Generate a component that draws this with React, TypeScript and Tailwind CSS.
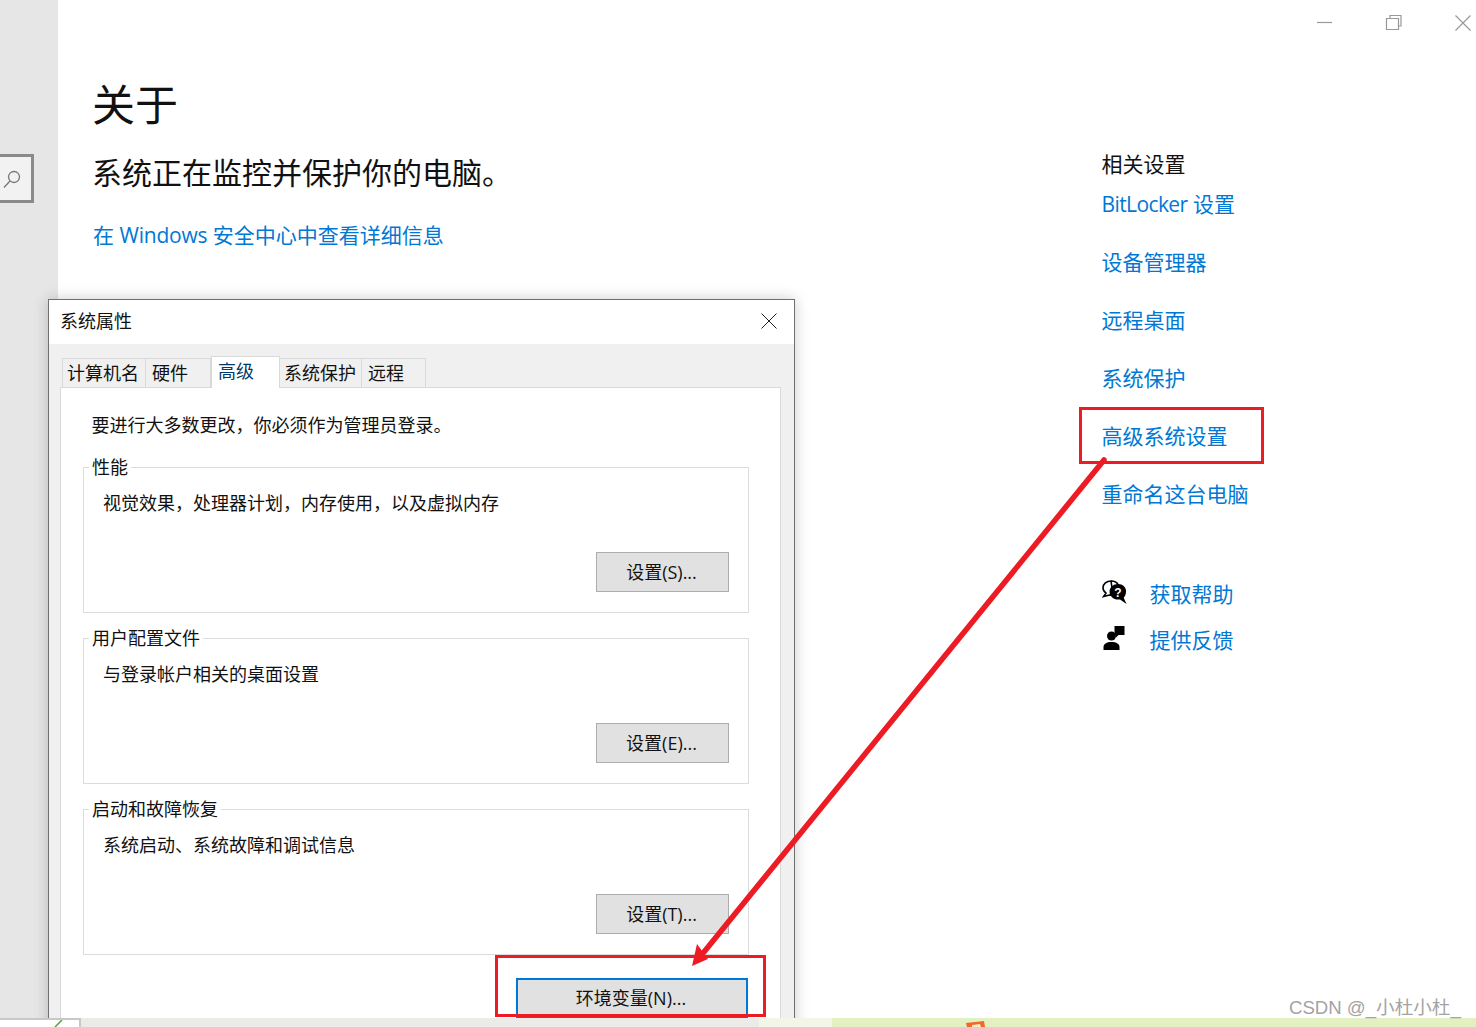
const font = "font-['Open_Sans','Noto_Sans_CJK_SC',sans-serif]";

const relatedLinks = ["设备管理器", "远程桌面", "系统保护", "高级系统设置", "重命名这台电脑"];

function GroupBox({ title, desc, button }: { title: string; desc: string; button: string }) {
  return (
    <div className="relative h-[146px] border border-[#dcdcdc]">
      <span className="absolute -top-[13px] left-[5px] bg-white px-[3px] text-[18px] leading-[24px] text-[#111]">{title}</span>
      <p className="pl-[19px] pt-[22px] text-[18px] leading-[26px] text-[#111]">{desc}</p>
      <button className="absolute bottom-[20px] right-[19px] h-[40px] w-[133px] border border-[#adadad] bg-[#e1e1e1] pr-[2px] text-[18px] text-[#111]">
        {button}
      </button>
    </div>
  );
}

function SystemDialog() {
  return (
    <div className="absolute left-[48px] top-[299px] h-[740px] w-[747px] border border-[#707070] bg-[#f0f0f0] shadow-[0_0_14px_rgba(0,0,0,0.2)]">
      <div className="flex h-[44px] items-center justify-between bg-white pb-[2px] pl-[11px] pr-[16px]">
        <span className="text-[18px] text-[#111]">系统属性</span>
        <svg width="18" height="18" viewBox="0 0 18 18" fill="none" stroke="#222" strokeWidth="1">
          <path d="M1.500 1.500 16.500 16.500M16.500 1.500 1.500 16.500" />
        </svg>
      </div>
      <div className="relative flex h-[43px] items-end pl-[13px] text-[18px] text-[#111]">
        <div className="flex h-[29px] w-[84px] items-center border border-b-0 border-[#d9d9d9] pl-[4px]">计算机名</div>
        <div className="flex h-[29px] w-[65px] items-center border border-b-0 border-l-0 border-[#d9d9d9] pl-[6px]">硬件</div>
        <div className="relative z-10 -mb-px flex h-[32px] w-[69px] items-center border border-b-0 border-[#d9d9d9] bg-white pb-[3px] pl-[6px] text-[#003a6a]">高级</div>
        <div className="flex h-[29px] w-[82px] items-center border border-b-0 border-l-0 border-[#d9d9d9] pl-[4px]">系统保护</div>
        <div className="flex h-[29px] w-[64px] items-center border border-b-0 border-l-0 border-[#d9d9d9] pl-[6px]">远程</div>
      </div>
      <div className="ml-[11px] h-[700px] w-[721px] border border-[#d9d9d9] bg-white pl-[22px] pr-[31px]">
        <p className="pl-[8.500px] pt-[24px] text-[18px] leading-[26px] text-[#111]">要进行大多数更改，你必须作为管理员登录。</p>
        <div className="mt-[29px] flex flex-col gap-[25px]">
          <GroupBox title="性能" desc="视觉效果，处理器计划，内存使用，以及虚拟内存" button="设置(S)..." />
          <GroupBox title="用户配置文件" desc="与登录帐户相关的桌面设置" button="设置(E)..." />
          <GroupBox title="启动和故障恢复" desc="系统启动、系统故障和调试信息" button="设置(T)..." />
        </div>
        <button className="absolute left-[467px] top-[678px] h-[40px] w-[232px] border-2 border-[#0078d7] bg-[#e1e1e1] pr-[2px] text-[18px] text-[#111]">
          环境变量(N)...
        </button>
      </div>
    </div>
  );
}

export default function App() {
  return (
    <div className={`relative h-[1027px] w-[1476px] overflow-hidden bg-white ${font}`}>
      <div className="flex h-[1018px]">
        {/* left nav */}
        <aside className="relative w-[58px] shrink-0 bg-[#e6e6e6]">
          <div className="absolute left-0 top-[154px] flex h-[49px] w-[34px] items-center justify-center border-[3px] border-l-0 border-[#8a8a8a] bg-[#f2f2f2]">
            <svg width="20" height="20" viewBox="0 0 20 20" fill="none" stroke="#777" strokeWidth="1.3" className="-ml-[8px]">
              <circle cx="12" cy="8" r="5.500" />
              <path d="M8 12 2 18.500" />
            </svg>
          </div>
        </aside>

        <main className="flex flex-1 justify-between">
          <div className="pl-[35px] pt-[74px]">
            <h1 className="-ml-px text-[43px] leading-[62px] text-[#111]">关于</h1>
            <p className="-ml-px mt-[15px] text-[30px] leading-[44px] text-[#111]">系统正在监控并保护你的电脑。</p>
            <a className="mt-[24px] block text-[21px] leading-[32px] text-[#0078d4]">
              在 <span className="tracking-[-0.2px]">Windows</span> 安全中心中查看详细信息
            </a>
          </div>
          <div className="w-[374.500px] pt-[149px]">
            <div className="h-[30px] text-[21px] leading-[30px] text-[#111]">相关设置</div>
            <div className="mt-[10px] flex flex-col gap-[28px]">
              <a className="h-[30px] text-[21px] leading-[30px] text-[#0078d4]">
                <span className="tracking-[-0.6px]">BitLocker</span> 设置
              </a>
              {relatedLinks.map((l) => (
                <a key={l} className="h-[30px] text-[21px] leading-[30px] text-[#0078d4]">{l}</a>
              ))}
            </div>
            <div className="mt-[70px] flex flex-col gap-[16px]">
              <div className="flex h-[30px] items-center gap-[23px]">
                <svg width="25" height="24" viewBox="0 0 25 24" className="-mt-[4px]">
                  <path d="M9 1C4.600 1 1 4 1 7.800c0 2.200 1.200 4.100 3 5.400L1.500 16.500l6-1.500c1 .2 2.500.2 3.500 0Z" fill="#fff" stroke="#000" strokeWidth="1.600" />
                  <path d="M9 1c3.300 0 6 1.500 7.300 3.800" fill="none" stroke="#000" strokeWidth="1.600" />
                  <path d="M16 4C11.300 4 7.500 7.500 7.500 11.800s3.800 7.800 8.500 7.800c.7 0 1.300-.1 2-.2l6.500 4.600-2.800-6.300c1.400-1.400 2.300-3.500 2.300-5.900C24.500 7.500 20.700 4 16 4Z" fill="#000" />
                  <text x="16" y="16.500" textAnchor="middle" fontSize="12" fontWeight="700" fill="#fff" fontFamily="Liberation Sans, sans-serif">?</text>
                </svg>
                <a className="text-[21px] leading-[30px] text-[#0078d4]">获取帮助</a>
              </div>
              <div className="flex h-[30px] items-center gap-[23px]">
                <svg width="25" height="24" viewBox="0 0 25 24" className="-mt-[4px]">
                  <circle cx="9.500" cy="10" r="4.500" />
                  <path d="M1.500 24v-3c0-3 3-5 8-5s8 2 8 5v3Z" />
                  <path d="M12.500 0h10v9h-6l-2.500 2.500V9h-1.500Z" />
                </svg>
                <a className="text-[21px] leading-[30px] text-[#0078d4]">提供反馈</a>
              </div>
            </div>
          </div>
        </main>
      </div>

      {/* window buttons */}
      <svg className="absolute right-0 top-0" width="170" height="34" viewBox="0 0 170 34" fill="none" stroke="#999" strokeWidth="1.2">
        <path d="M11 22.500h15" />
        <path d="M80.500 18.500h12v11h-12Z" />
        <path d="M84 18V15.500h11V26h-2.500" />
        <path d="M149.500 15.500l15 15M164.500 15.500l-15 15" />
      </svg>

      <SystemDialog />

      {/* bottom strip of the window behind */}
      <div className="absolute bottom-0 left-0 flex h-[9px] w-full">
        <div className="relative w-[81px] border-r-[2px] border-t-[2px] border-[#c8c8c8] bg-white">
          <svg className="absolute left-[52px] top-0" width="14" height="7" viewBox="0 0 14 7" fill="none" stroke="#5d9e3c" strokeWidth="1.500">
            <path d="M3 7 10 0" />
          </svg>
        </div>
        <div className="w-[678px] bg-[#ebebe8]" />
        <div className="w-[73px] bg-[#f2f6e9]" />
        <div className="relative flex-1 bg-[#e3f0c1]">
          <svg className="absolute left-[134px] top-[3px]" width="20" height="6" viewBox="0 0 20 6">
            <path d="M0 2 18 0l1 6h-4l-1-3-8 1v2H1Z" fill="#f4672c" />
          </svg>
        </div>
      </div>

      {/* annotations */}
      <div className="absolute left-[1079px] top-[407px] h-[57px] w-[185px] border-[3px] border-[#ed1c24]" />
      <div className="absolute left-[495px] top-[955px] h-[62px] w-[271px] border-[3px] border-[#ed1c24]" />
      <svg className="absolute left-0 top-0" width="1476" height="1027" fill="none">
        <path d="M1104 460 704 952" stroke="#ed1c24" strokeWidth="5.500" strokeLinecap="round" />
        <path d="M692 966 697 944 708 959Z" fill="#ed1c24" />
      </svg>

      <div className="absolute left-[1289px] top-[996px] font-['Liberation_Sans','Noto_Sans_CJK_SC',sans-serif] text-[18.600px] leading-[24px] text-[#a3a3a3]">
        CSDN @_小杜小杜_
      </div>
    </div>
  );
}
